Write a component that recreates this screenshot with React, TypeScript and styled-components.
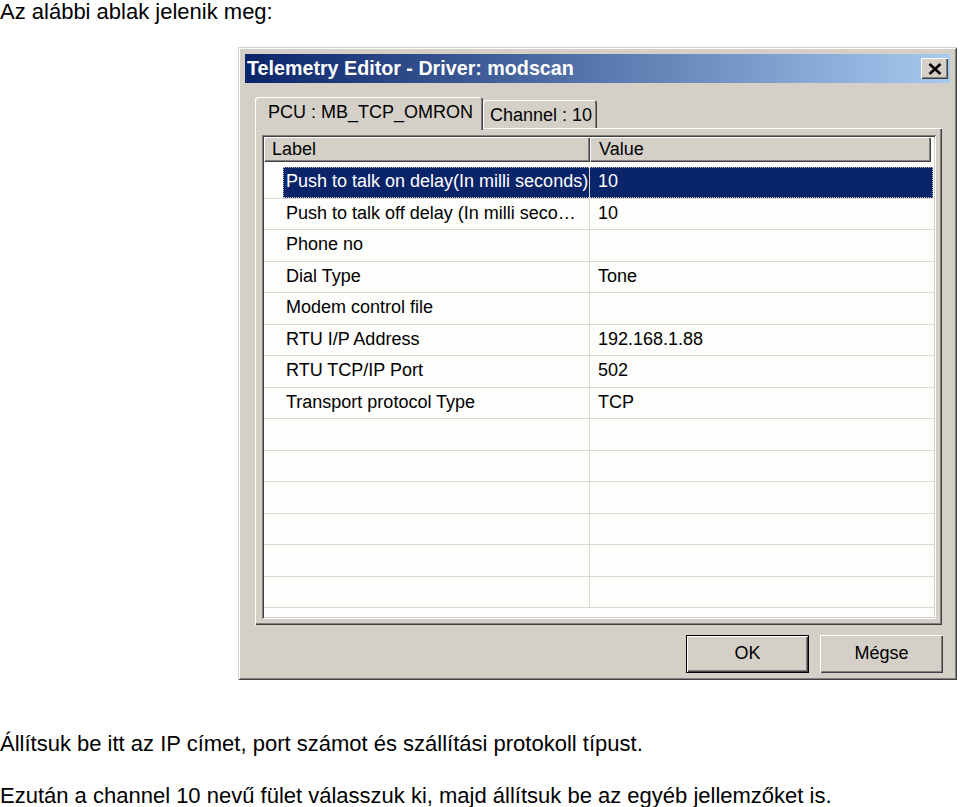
import React from 'react';
import styled, { createGlobalStyle } from 'styled-components';

// Telemetry editor dialog as shown in the manual page

const GlobalStyle = createGlobalStyle`
html, body {
  margin: 0;
  padding: 0;
  background: #fff;
}
body {
  font-family: "Liberation Sans", Arial, sans-serif;
  color: #000;
}
`

const Page = styled.div`
width: 960px;
min-height: 807px;
`

const Text = styled.p<{ $top: number }>`
margin: ${p => p.$top}px 0 0 0;
font-size: 22px;
line-height: 24px;
white-space: nowrap;
`

const Window = styled.div`
margin: 23px 0 0 238px;
width: 719px;
height: 633px;
box-sizing: border-box;
padding: 7px;
display: flex;
flex-direction: column;
background: #d4d0c8;
box-shadow: inset 1px 1px 0 #d4d0c8, inset -1px -1px 0 #404040,
  inset 2px 2px 0 #fff, inset -2px -2px 0 #808080;
font-family: "Liberation Sans", Arial, sans-serif;
font-size: 18px;
`

const TitleBar = styled.div`
height: 29px;
flex: none;
display: flex;
align-items: center;
justify-content: space-between;
padding: 0 2px;
background: linear-gradient(90deg, #0a246a 0%, #a6caf0 100%);
color: #fff;
font-weight: bold;
font-size: 19.7px;
`

const CloseButton = styled.div`
width: 27px;
height: 21px;
display: flex;
align-items: center;
justify-content: center;
background: #d4d0c8;
box-shadow: inset 1px 1px 0 #fff, inset -1px -1px 0 #404040, inset -2px -2px 0 #808080;
`

const Body = styled.div`
flex: 1;
display: flex;
flex-direction: column;
padding: 14px 8px 0 10px;
`

const TabStrip = styled.div`
height: 31px;
flex: none;
display: flex;
align-items: flex-end;
`

const Tab = styled.div<{ $active?: boolean }>`
box-sizing: border-box;
position: relative;
z-index: ${p => (p.$active ? 1 : 0)};
height: ${p => (p.$active ? 33 : 28)}px;
margin-bottom: ${p => (p.$active ? -2 : 0)}px;
padding: ${p => (p.$active ? '0 10px 2px 13px' : '2px 5px 0 7px')};
display: flex;
align-items: center;
background: #d4d0c8;
border-radius: 3px 3px 0 0;
box-shadow: inset 1px 1px 0 #fff, inset -1px 0 0 #404040, inset -2px 0 0 #808080;
`

const Panel = styled.div`
flex: 1;
display: flex;
padding: 7px 6px 6px 7px;
background: #d4d0c8;
box-shadow: inset 1px 1px 0 #fff, inset -1px -1px 0 #404040, inset -2px -2px 0 #808080;
`

const List = styled.div`
flex: 1;
padding: 2px;
background: #fdfdfb;
box-shadow: inset 1px 1px 0 #808080, inset -1px -1px 0 #fff,
  inset 2px 2px 0 #404040, inset -2px -2px 0 #d4d0c8;
`

const Header = styled.div`
display: grid;
grid-template-columns: 326px 341px 1fr;
height: 25px;
margin-bottom: 5px;
background: #fdfdfb;
`

const HeadCell = styled.div<{ $pad: number }>`
display: flex;
align-items: center;
padding-left: ${p => p.$pad}px;
background: #d4d0c8;
box-shadow: inset 1px 1px 0 #fff, inset -1px -1px 0 #404040, inset -2px -2px 0 #808080;
`

const Row = styled.div`
display: grid;
grid-template-columns: 19px 307px 1fr;
box-sizing: border-box;
height: 31.5px;
border-bottom: 1px solid #dcd8d0;
`

const Cell = styled.div<{ $col: number; $selected?: boolean; $pad: number; $line?: boolean }>`
grid-row: 1;
grid-column: ${p => p.$col};
display: flex;
align-items: center;
padding: 0 0 1px ${p => p.$pad}px;
white-space: nowrap;
overflow: hidden;
background: ${p => (p.$selected ? '#0a246a' : 'transparent')};
color: ${p => (p.$selected ? '#fff' : '#000')};
border-right: ${p => (p.$line ? '1px solid #dcd8d0' : 'none')};
margin-right: ${p => (p.$col === 3 ? 1 : 0)}px;
`

const Focus = styled.span`
grid-row: 1;
grid-column: 2 / 4;
margin-right: 1px;
border: 1px dotted #b8b8b8;
pointer-events: none;
`

const ButtonRow = styled.div`
flex: none;
display: flex;
justify-content: flex-end;
gap: 11px;
margin: 10px -1px 0 0;
`

const Button = styled.div<{ $default?: boolean }>`
box-sizing: border-box;
width: 123px;
height: 38px;
display: flex;
align-items: center;
justify-content: center;
padding-bottom: 2px;
background: #d4d0c8;
border: ${p => (p.$default ? '1px solid #000' : 'none')};
box-shadow: inset 1px 1px 0 #fff, inset -1px -1px 0 #404040, inset -2px -2px 0 #808080;
`

const rows: [string, string][] = [
  ['Push to talk on delay(In milli seconds)', '10'],
  ['Push to talk off delay (In milli seco…', '10'],
  ['Phone no', ''],
  ['Dial Type', 'Tone'],
  ['Modem control file', ''],
  ['RTU I/P Address', '192.168.1.88'],
  ['RTU TCP/IP Port', '502'],
  ['Transport protocol Type', 'TCP'],
  ['', ''],
  ['', ''],
  ['', ''],
  ['', ''],
  ['', ''],
  ['', ''],
]

function App() {
  return (
    <Page>
      <GlobalStyle />
      <Text $top={0}>Az alábbi ablak jelenik meg:</Text>
      <Window>
        <TitleBar>
          <span>Telemetry Editor - Driver: modscan</span>
          <CloseButton>
            <svg width="14" height="12" viewBox="0 0 14 12">
              <path d="M1.5 1 L12.5 11 M12.5 1 L1.5 11" stroke="#000" strokeWidth="2.6" />
            </svg>
          </CloseButton>
        </TitleBar>
        <Body>
          <TabStrip>
            <Tab $active>PCU : MB_TCP_OMRON</Tab>
            <Tab>Channel : 10</Tab>
          </TabStrip>
          <Panel>
            <List>
              <Header>
                <HeadCell $pad={8}>Label</HeadCell>
                <HeadCell $pad={9}>Value</HeadCell>
              </Header>
              {rows.map((r, i) => (
                <Row key={i}>
                  <Cell $col={1} $pad={0} />
                  <Cell $col={2} $pad={3} $line $selected={i === 0}>{r[0]}</Cell>
                  <Cell $col={3} $pad={8} $selected={i === 0}>{r[1]}</Cell>
                  {i === 0 && <Focus />}
                </Row>
              ))}
            </List>
          </Panel>
          <ButtonRow>
            <Button $default>OK</Button>
            <Button>Mégse</Button>
          </ButtonRow>
        </Body>
      </Window>
      <Text $top={52}>Állítsuk be itt az IP címet, port számot és szállítási protokoll típust.</Text>
      <Text $top={28}>Ezután a channel 10 nevű fület válasszuk ki, majd állítsuk be az egyéb jellemzőket is.</Text>
    </Page>
  );
}

export default App;
